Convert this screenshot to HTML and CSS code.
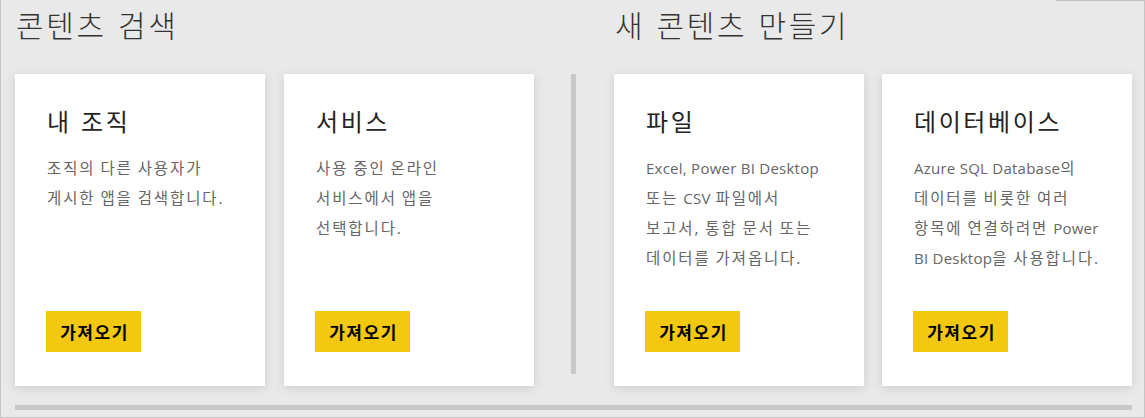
FILE: index.html
```html
<!DOCTYPE html>
<html lang="ko">
<head>
<meta charset="utf-8">
<title>콘텐츠 가져오기</title>
<link rel="stylesheet" href="styles.css">
</head>
<body>
<div class="frame">
  <div class="row">
    <section class="section">
      <h1 class="section-title">콘텐츠 검색</h1>
      <div class="cards">
        <div class="card">
          <h2 class="card-title">내 조직</h2>
          <p class="card-desc">조직의 다른 사용자가<br>게시한 앱을 검색합니다.</p>
          <button class="get-btn">가져오기</button>
        </div>
        <div class="card">
          <h2 class="card-title">서비스</h2>
          <p class="card-desc">사용 중인 온라인<br>서비스에서 앱을<br>선택합니다.</p>
          <button class="get-btn">가져오기</button>
        </div>
      </div>
    </section>
    <div class="divider"></div>
    <section class="section section-create">
      <h1 class="section-title">새 콘텐츠 만들기</h1>
      <div class="cards cards-create">
        <div class="card">
          <h2 class="card-title">파일</h2>
          <p class="card-desc"><span class="en">Excel, Power BI Desktop</span><br>또는 <span class="en">CSV</span> 파일에서<br>보고서, 통합 문서 또는<br>데이터를 가져옵니다.</p>
          <button class="get-btn">가져오기</button>
        </div>
        <div class="card">
          <h2 class="card-title">데이터베이스</h2>
          <p class="card-desc"><span class="en">Azure SQL Database</span>의<br>데이터를 비롯한 여러<br>항목에 연결하려면 <span class="en">Power</span><br><span class="en">BI Desktop</span>을 사용합니다.</p>
          <button class="get-btn">가져오기</button>
        </div>
      </div>
    </section>
  </div>
  <div class="bottom-bar"></div>
</div>
</body>
</html>
```

FILE: styles.css
```css
* { box-sizing: border-box; }

html, body {
  margin: 0;
  padding: 0;
}

body {
  background: #e9e9e9;
  font-family: "Open Sans", "Noto Sans CJK KR", sans-serif;
}

.frame {
  position: relative;
  width: 1145px;
  height: 418px;
  background: #e9e9e9;
  border-left: 1px solid #c6c6c6;
  border-right: 1px solid #c6c6c6;
  border-bottom: 1px solid #c6c6c6;
  padding-left: 14px;
  display: flex;
  flex-direction: column;
}

.frame::before {
  content: "";
  position: absolute;
  top: 0;
  left: 1055px;
  right: -1px;
  height: 1px;
  background: #c2c2c2;
}

.row {
  display: flex;
  align-items: flex-start;
}

.section {
  display: flex;
  flex-direction: column;
}

.section-title {
  margin: 0;
  padding-top: 4px;
  height: 74px;
  font-family: "Noto Sans CJK KR", sans-serif;
  font-weight: 300;
  font-size: 30px;
  line-height: 40px;
  color: #333333;
  letter-spacing: 2.7px;
  padding-left: 1px;
  white-space: nowrap;
}

.cards {
  display: flex;
  gap: 19px;
}

.cards-create {
  gap: 18px;
}

.card {
  width: 250px;
  height: 312px;
  background: #ffffff;
  box-shadow: 0 2px 10px rgba(0, 0, 0, 0.12);
  padding: 31px 20px 34px 32px;
  display: flex;
  flex-direction: column;
  align-items: flex-start;
}

.card-title {
  margin: 0;
  font-family: "Noto Sans CJK KR", sans-serif;
  font-weight: 400;
  font-size: 24px;
  line-height: 32px;
  color: #252423;
  letter-spacing: 2.6px;
  white-space: nowrap;
}

.card-desc {
  margin: 16px 0 0 0;
  font-size: 15.5px;
  line-height: 30px;
  color: #666666;
  letter-spacing: 1.9px;
  word-spacing: -1px;
  white-space: nowrap;
}

.card-desc .en {
  font-size: 15px;
  letter-spacing: 0.25px;
  word-spacing: 0;
}

.get-btn {
  margin-top: auto;
  margin-left: -1px;
  width: 95px;
  height: 41px;
  border: none;
  background: #f2c811;
  color: #000000;
  font-family: "Noto Sans CJK KR", sans-serif;
  font-weight: 700;
  font-size: 17px;
  line-height: 41px;
  letter-spacing: 1.5px;
  padding: 0 0 0 2px;
  text-align: center;
  cursor: pointer;
}

.divider {
  width: 5px;
  height: 300px;
  margin: 74px 38px 0 37px;
  background: #c8c8c8;
}

.bottom-bar {
  width: 1117px;
  height: 5px;
  margin-top: 19px;
  background: #c8c8c8;
}
```
